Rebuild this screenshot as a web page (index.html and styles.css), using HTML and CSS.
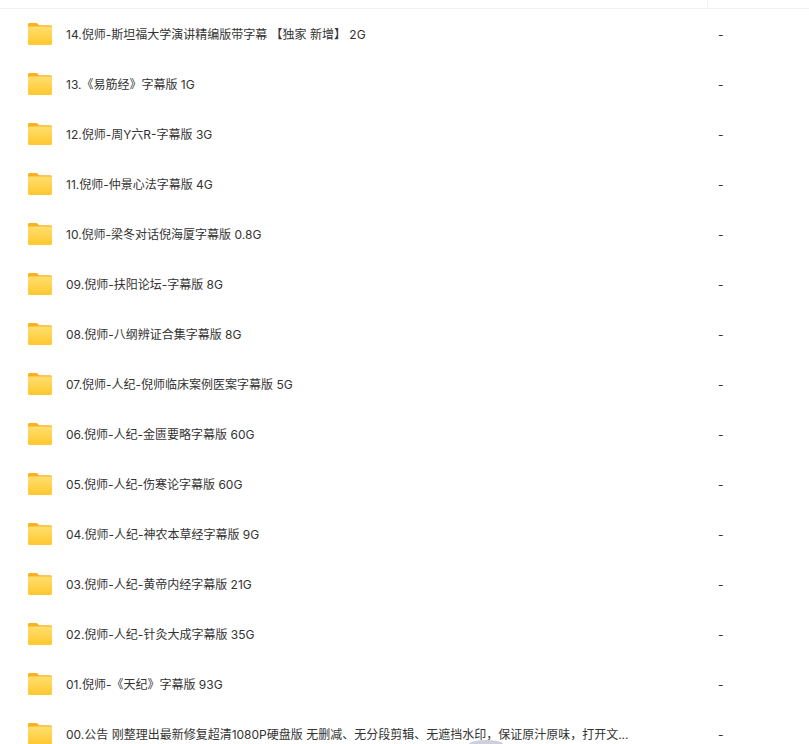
FILE: index.html
```html
<!DOCTYPE html>
<html lang="en">
<head>
  <meta charset="UTF-8" />
  <title>文件列表</title>
  <link rel="stylesheet" href="styles.css">
</head>
<body>
  <svg class="icon-defs" width="0" height="0">
    <defs>
      <linearGradient id="folderFront" x1="0" y1="0" x2="0" y2="1">
        <stop offset="0" stop-color="#ffdf6e"/>
        <stop offset="1" stop-color="#ffc72e"/>
      </linearGradient>
      <symbol id="folder" viewBox="0 0 24 22">
        <path d="M1.5 0h6.6c.7 0 1.2.3 1.7.8L11 2.2h11.2c1 0 1.8.8 1.8 1.8v3H0V1.5C0 .7.7 0 1.5 0z" fill="#fdb022"/>
        <path d="M1.5 3.6h21c.8 0 1.5.7 1.5 1.5v15.4c0 .8-.7 1.5-1.5 1.5h-21C.7 22 0 21.300 0 20.500V5.100c0-.8.7-1.500 1.500-1.500z" fill="url(#folderFront)"/>
      </symbol>
    </defs>
  </svg>

  <div class="header">
    <div class="header-name"></div>
    <div class="header-size"></div>
  </div>

  <ul class="file-list">
    <li class="file-row">
      <svg class="folder-icon"><use href="#folder"/></svg>
      <span class="file-name">14.倪师-斯坦福大学演讲精编版带字幕 【独家 新增】 2G</span>
      <span class="file-size">-</span>
    </li>
    <li class="file-row">
      <svg class="folder-icon"><use href="#folder"/></svg>
      <span class="file-name">13.《易筋经》字幕版 1G</span>
      <span class="file-size">-</span>
    </li>
    <li class="file-row">
      <svg class="folder-icon"><use href="#folder"/></svg>
      <span class="file-name">12.倪师-周Y六R-字幕版 3G</span>
      <span class="file-size">-</span>
    </li>
    <li class="file-row">
      <svg class="folder-icon"><use href="#folder"/></svg>
      <span class="file-name">11.倪师-仲景心法字幕版 4G</span>
      <span class="file-size">-</span>
    </li>
    <li class="file-row">
      <svg class="folder-icon"><use href="#folder"/></svg>
      <span class="file-name">10.倪师-梁冬对话倪海厦字幕版 0.8G</span>
      <span class="file-size">-</span>
    </li>
    <li class="file-row">
      <svg class="folder-icon"><use href="#folder"/></svg>
      <span class="file-name">09.倪师-扶阳论坛-字幕版 8G</span>
      <span class="file-size">-</span>
    </li>
    <li class="file-row">
      <svg class="folder-icon"><use href="#folder"/></svg>
      <span class="file-name">08.倪师-八纲辨证合集字幕版 8G</span>
      <span class="file-size">-</span>
    </li>
    <li class="file-row">
      <svg class="folder-icon"><use href="#folder"/></svg>
      <span class="file-name">07.倪师-人纪-倪师临床案例医案字幕版 5G</span>
      <span class="file-size">-</span>
    </li>
    <li class="file-row">
      <svg class="folder-icon"><use href="#folder"/></svg>
      <span class="file-name">06.倪师-人纪-金匮要略字幕版 60G</span>
      <span class="file-size">-</span>
    </li>
    <li class="file-row">
      <svg class="folder-icon"><use href="#folder"/></svg>
      <span class="file-name">05.倪师-人纪-伤寒论字幕版 60G</span>
      <span class="file-size">-</span>
    </li>
    <li class="file-row">
      <svg class="folder-icon"><use href="#folder"/></svg>
      <span class="file-name">04.倪师-人纪-神农本草经字幕版 9G</span>
      <span class="file-size">-</span>
    </li>
    <li class="file-row">
      <svg class="folder-icon"><use href="#folder"/></svg>
      <span class="file-name">03.倪师-人纪-黄帝内经字幕版 21G</span>
      <span class="file-size">-</span>
    </li>
    <li class="file-row">
      <svg class="folder-icon"><use href="#folder"/></svg>
      <span class="file-name">02.倪师-人纪-针灸大成字幕版 35G</span>
      <span class="file-size">-</span>
    </li>
    <li class="file-row">
      <svg class="folder-icon"><use href="#folder"/></svg>
      <span class="file-name">01.倪师-《天纪》字幕版 93G</span>
      <span class="file-size">-</span>
    </li>
    <li class="file-row">
      <svg class="folder-icon"><use href="#folder"/></svg>
      <span class="file-name">00.公告 刚整理出最新修复超清1080P硬盘版 无删减、无分段剪辑、无遮挡水印，保证原汁原味，打开文...</span>
      <span class="file-size">-</span>
    </li>
  </ul>

  <div class="float-ball"></div>
</body>
</html>
```

FILE: styles.css
```css
* {
  box-sizing: border-box;
  margin: 0;
  padding: 0;
}

html,
body {
  height: 744px;
  overflow: hidden;
}

body {
  background: #fff;
  font-family: Inter, "Noto Sans CJK SC", sans-serif;
  font-size: 12px;
  color: #333;
  position: relative;
}

.icon-defs {
  position: absolute;
}

.header {
  display: flex;
  height: 9px;
  border-bottom: 1px solid #f1f2f4;
}

.header-name {
  width: 708px;
  border-right: 1px solid #f1f2f4;
}

.header-size {
  flex: 1;
}

.file-list {
  list-style: none;
  height: 735px;
  overflow: hidden;
}

.file-row {
  display: flex;
  align-items: center;
  height: 50px;
}

.folder-icon {
  width: 24px;
  height: 22px;
  margin-left: 28px;
  flex: none;
}

.file-name {
  width: 652px;
  margin-left: 14px;
  padding-bottom: 2px;
  flex: none;
}

.file-size {
  padding-top: 1px;
}

.float-ball {
  position: absolute;
  left: 469px;
  top: 740px;
  width: 34px;
  height: 4px;
  border-radius: 50% 50% 0 0 / 100% 100% 0 0;
  background: #cdd0db;
}
```
